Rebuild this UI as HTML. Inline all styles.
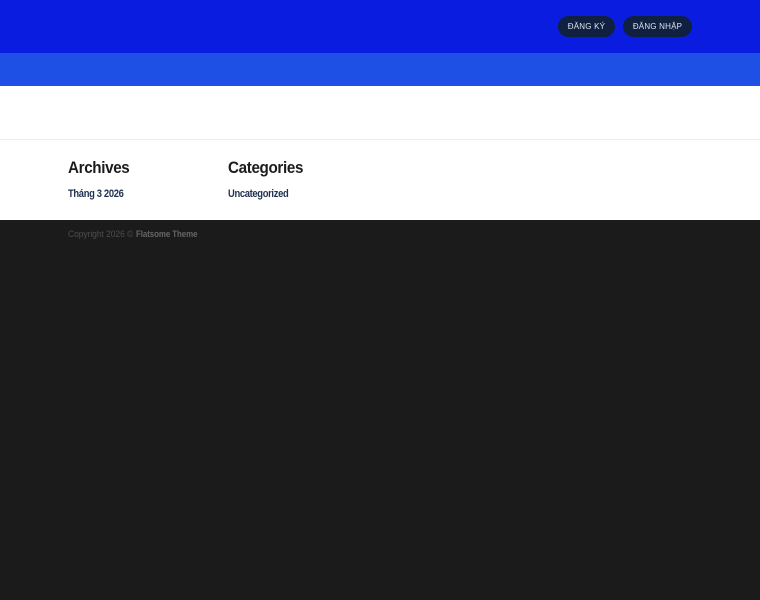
<!DOCTYPE html>
<html lang="vi">
<head>
<meta charset="utf-8">
<title>Flatsome</title>
<style>
html,body{margin:0;padding:0;width:760px;height:600px;overflow:hidden;background:#1b1b1b;font-family:"Liberation Sans",sans-serif;}
.top{position:absolute;left:0;top:0;width:760px;height:53px;background:#0a1ce0;}
.bar{position:absolute;left:0;top:53px;width:760px;height:33px;background:#1e50e6;}
.main{position:absolute;left:0;top:86px;width:760px;height:134px;background:#fff;}
.line{position:absolute;left:0;top:139px;width:760px;height:1px;background:#ececec;}
.btn{position:absolute;top:16px;height:21px;line-height:21px;border-radius:11px;background:#102040;color:#dfe4ee;font-size:8px;text-align:center;white-space:nowrap;letter-spacing:.2px;}
h3{position:absolute;margin:0;top:157px;font-size:17px;line-height:22px;font-weight:700;color:#1c1c1c;letter-spacing:-.4px;white-space:nowrap;transform:scaleX(.895);transform-origin:left top;}
.lnk{position:absolute;top:187px;font-size:11px;line-height:14px;font-weight:700;color:#1f3050;letter-spacing:-.4px;white-space:nowrap;text-decoration:none;transform:scaleX(.855);transform-origin:left top;}
.copy{position:absolute;top:228px;font-size:9.5px;line-height:13px;color:#4d4d4d;white-space:nowrap;letter-spacing:-.1px;transform-origin:left top;}
</style>
</head>
<body>
<div class="top"></div>
<div class="bar"></div>
<div class="main"></div>
<div class="line"></div>
<a class="btn" style="left:558px;width:57px;">ĐĂNG KÝ</a>
<a class="btn" style="left:623px;width:69px;">ĐĂNG NHẬP</a>
<h3 style="left:68px;">Archives</h3>
<h3 style="left:228px;">Categories</h3>
<a class="lnk" style="left:68px;">Tháng 3 2026</a>
<a class="lnk" style="left:228px;">Uncategorized</a>
<div class="copy" style="left:68px;transform:scaleX(.9);">Copyright 2026 ©</div>
<div class="copy" style="left:136px;transform:scaleX(.835);color:#666;font-weight:700;">Flatsome Theme</div>
</body>
</html>
